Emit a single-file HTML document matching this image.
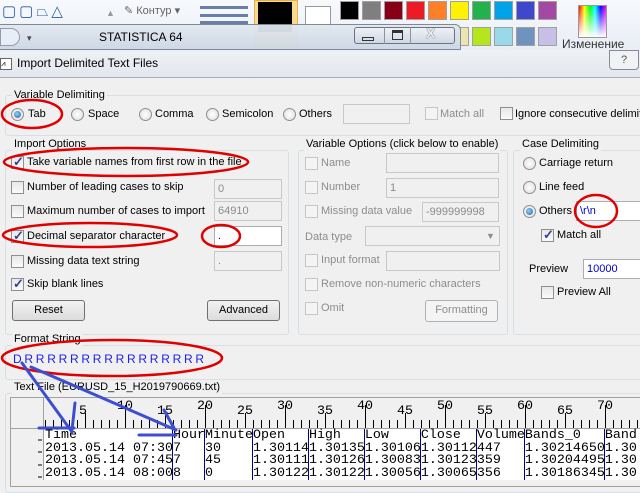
<!DOCTYPE html>
<html><head><meta charset="utf-8"><style>
*{box-sizing:border-box;margin:0;padding:0}
body{width:640px;height:480px;overflow:hidden;background:#f0f0f0;font-family:"Liberation Sans",sans-serif;font-size:11px;color:#000;position:relative}
.a{position:absolute;white-space:nowrap;line-height:15px}
.g{position:absolute;border:1px solid #d5dfe5;border-radius:3px}
.gl{position:absolute;background:#f0f0f0;padding:0 2px;line-height:14px}
.cb{position:absolute;width:13px;height:13px;border:1px solid #8e8f8f;background:linear-gradient(#e8e8e8,#fafafa)}
.cb.d{border-color:#c6c6c6;background:#f4f4f4}
.rb{position:absolute;width:13px;height:13px;border:1px solid #8e8f8f;border-radius:50%;background:radial-gradient(#fff,#dcdcdc)}
.rb.on::after{content:"";position:absolute;left:2px;top:2px;width:7px;height:7px;border-radius:50%;background:radial-gradient(circle at 40% 40%,#8fd2f5,#1f5fa8)}
.ck::after{content:"✓";position:absolute;left:1px;top:-3px;font-size:13px;color:#33448c;font-weight:bold}
.in{position:absolute;border:1px solid #abadb3;background:#fff;padding-left:3px;line-height:18px}
.in.d{border-color:#c8c8c8;background:#f0f0f0;color:#8a8a8a}
.dis{color:#8d8d8d}
.bt{position:absolute;border:1px solid #707070;border-radius:3px;background:linear-gradient(#f2f2f2,#dcdcdc);text-align:center;line-height:19px}
.bt.d{border-color:#adb2b5;color:#8d8d8d;background:#f4f4f4}
.mono{font-family:"Liberation Mono",monospace;font-size:13.33px;position:absolute;white-space:pre;line-height:12.7px}
.sw{position:absolute;width:19px;height:19px;border:1px solid #a0a0a0}
</style></head><body>
<div class="a" style="left:0;top:0;width:640px;height:50px;background:linear-gradient(#f7f9fc,#e9eef5)"></div>
<div class="a" style="left:2px;top:4px;width:95px;height:16px;color:#2a5ca8;font-size:15px;letter-spacing:3px">▢▢⏢△</div>
<div class="a" style="left:106px;top:6px;color:#999;font-size:9px">▲</div>
<div class="a" style="left:124px;top:4px;color:#666;font-size:11px">✎ Контур ▾</div>
<div class="a" style="left:200px;top:6px;width:48px;height:3px;background:#6a7fa8"></div>
<div class="a" style="left:200px;top:14px;width:48px;height:3px;background:#6a7fa8"></div>
<div class="a" style="left:200px;top:21px;width:48px;height:4px;background:#6a7fa8"></div>
<div class="a" style="left:254px;top:0;width:44px;height:50px;background:#fbd98c;border:1px solid #e5b050"></div>
<div class="a" style="left:258px;top:2px;width:34px;height:30px;background:#000"></div>
<div class="a" style="left:305px;top:6px;width:26px;height:24px;background:#fff;border:1px solid #999"></div>
<div class="sw" style="left:340px;top:1px;background:#000"></div>
<div class="sw" style="left:362px;top:1px;background:#7f7f7f"></div>
<div class="sw" style="left:384px;top:1px;background:#880015"></div>
<div class="sw" style="left:406px;top:1px;background:#ed1c24"></div>
<div class="sw" style="left:428px;top:1px;background:#ff7f27"></div>
<div class="sw" style="left:450px;top:1px;background:#fff200"></div>
<div class="sw" style="left:472px;top:1px;background:#22b14c"></div>
<div class="sw" style="left:494px;top:1px;background:#00a2e8"></div>
<div class="sw" style="left:516px;top:1px;background:#3f48cc"></div>
<div class="sw" style="left:538px;top:1px;background:#a349a4"></div>
<div class="sw" style="left:450px;top:27px;background:#efe4b0"></div>
<div class="sw" style="left:472px;top:27px;background:#b5e61d"></div>
<div class="sw" style="left:494px;top:27px;background:#99d9ea"></div>
<div class="sw" style="left:516px;top:27px;background:#7092be"></div>
<div class="sw" style="left:538px;top:27px;background:#c8bfe7"></div>
<div class="a" style="left:578px;top:5px;width:29px;height:33px;border:1px solid #999;background:linear-gradient(to bottom,rgba(255,255,255,0),#fff),linear-gradient(to right,red,yellow,lime,cyan,blue,magenta)"></div>
<div class="a" style="left:562px;top:37px;color:#333;font-size:12px">Изменение</div>
<div class="a" style="left:0;top:24px;width:461px;height:26px;background:linear-gradient(rgba(225,232,240,.95),rgba(205,215,228,.95));border:1px solid #7f8a96;border-left:none;border-radius:0 6px 0 0"></div>
<div class="a" style="left:0;top:28px;width:20px;height:18px;border:1px solid #99a;border-radius:0 9px 9px 0;background:#e8eef6"></div>
<div class="a" style="left:27px;top:31px;font-size:9px;color:#444">▾</div>
<div class="a" style="left:99px;top:30px;font-size:12px">STATISTICA 64</div>
<div class="a" style="left:354px;top:27px;width:101px;height:17px;border:1px solid #6b7580;border-radius:3px;background:linear-gradient(#eef2f7,#d0d8e2)"></div>
<div class="a" style="left:384px;top:27px;width:1px;height:17px;background:#8a94a0"></div>
<div class="a" style="left:410px;top:27px;width:1px;height:17px;background:#8a94a0"></div>
<div class="a" style="left:362px;top:37px;width:12px;height:4px;border:1px solid #333"></div>
<div class="a" style="left:392px;top:30px;width:11px;height:10px;border:1px solid #333;border-top-width:3px"></div>
<div class="a" style="left:426px;top:26px;font-size:14px;font-weight:bold;color:#eee;text-shadow:0 0 1px #000">X</div>
<div class="a" style="left:0;top:50px;width:640px;height:28px;background:linear-gradient(#eef1f4,#e3e8ee);border-bottom:1px solid #aab"></div>
<div class="a" style="left:0;top:58px;width:12px;height:12px;border:1px solid #666;background:#fff;font-size:8px;line-height:10px">⩘</div>
<div class="a" style="left:17px;top:56px;font-size:12px">Import Delimited Text Files</div>
<div class="a" style="left:609px;top:50px;width:30px;height:20px;border:1px solid #889;border-radius:0 0 4px 4px;background:#f0f2f5;text-align:center;line-height:18px;color:#555">?</div>

<div class="g" style="left:5px;top:95px;width:640px;height:41px"></div>
<div class="gl" style="left:12px;top:88px">Variable Delimiting</div>
<div class="rb on" style="left:11px;top:108px"></div><div class="a" style="left:28px;top:107px">Tab</div>
<div class="rb" style="left:71px;top:108px"></div><div class="a" style="left:88px;top:107px">Space</div>
<div class="rb" style="left:139px;top:108px"></div><div class="a" style="left:155px;top:107px">Comma</div>
<div class="rb" style="left:206px;top:108px"></div><div class="a" style="left:222px;top:107px">Semicolon</div>
<div class="rb" style="left:283px;top:108px"></div><div class="a" style="left:299px;top:107px">Others</div>
<div class="in d" style="left:343px;top:104px;width:67px;height:20px"></div>
<div class="cb d" style="left:425px;top:107px"></div><div class="a dis" style="left:440px;top:107px">Match all</div>
<div class="cb" style="left:500px;top:107px"></div><div class="a" style="left:515px;top:107px">Ignore consecutive delimiters</div>

<div class="g" style="left:5px;top:150px;width:284px;height:185px"></div>
<div class="gl" style="left:12px;top:137px">Import Options</div>
<div class="cb ck" style="left:11px;top:156px"></div><div class="a" style="left:27px;top:155px">Take variable names from first row in the file</div>
<div class="cb" style="left:11px;top:181px"></div><div class="a" style="left:27px;top:180px">Number of leading cases to skip</div>
<div class="in d" style="left:214px;top:179px;width:68px;height:20px">0</div>
<div class="cb" style="left:11px;top:205px"></div><div class="a" style="left:27px;top:204px">Maximum number of cases to import</div>
<div class="in d" style="left:214px;top:201px;width:68px;height:20px">64910</div>
<div class="cb ck" style="left:11px;top:230px"></div><div class="a" style="left:27px;top:229px">Decimal separator character</div>
<div class="in" style="left:214px;top:226px;width:68px;height:20px;color:#00c">.</div>
<div class="cb" style="left:11px;top:255px"></div><div class="a" style="left:27px;top:254px">Missing data text string</div>
<div class="in d" style="left:214px;top:251px;width:68px;height:20px">.</div>
<div class="cb ck" style="left:11px;top:278px"></div><div class="a" style="left:27px;top:277px">Skip blank lines</div>
<div class="bt" style="left:12px;top:300px;width:73px;height:21px">Reset</div>
<div class="bt" style="left:207px;top:300px;width:73px;height:21px">Advanced</div>

<div class="g" style="left:298px;top:150px;width:210px;height:185px"></div>
<div class="gl" style="left:304px;top:137px">Variable Options (click below to enable)</div>
<div class="cb d" style="left:305px;top:157px"></div><div class="a dis" style="left:321px;top:156px">Name</div>
<div class="in d" style="left:386px;top:153px;width:113px;height:20px"></div>
<div class="cb d" style="left:305px;top:181px"></div><div class="a dis" style="left:321px;top:180px">Number</div>
<div class="in d" style="left:386px;top:178px;width:113px;height:20px">1</div>
<div class="cb d" style="left:305px;top:205px"></div><div class="a dis" style="left:321px;top:204px">Missing data value</div>
<div class="in d" style="left:422px;top:202px;width:77px;height:20px">-999999998</div>
<div class="a dis" style="left:305px;top:230px">Data type</div>
<div class="in d" style="left:365px;top:226px;width:135px;height:20px"></div><div class="a dis" style="left:486px;top:229px;font-size:9px">▼</div>
<div class="cb d" style="left:305px;top:254px"></div><div class="a dis" style="left:321px;top:253px">Input format</div>
<div class="in d" style="left:386px;top:251px;width:114px;height:20px"></div>
<div class="cb d" style="left:305px;top:278px"></div><div class="a dis" style="left:321px;top:277px">Remove non-numeric characters</div>
<div class="cb d" style="left:305px;top:302px"></div><div class="a dis" style="left:321px;top:301px">Omit</div>
<div class="bt d" style="left:425px;top:300px;width:73px;height:22px">Formatting</div>

<div class="g" style="left:513px;top:150px;width:140px;height:185px"></div>
<div class="gl" style="left:520px;top:137px">Case Delimiting</div>
<div class="rb" style="left:523px;top:157px"></div><div class="a" style="left:539px;top:156px">Carriage return</div>
<div class="rb" style="left:523px;top:181px"></div><div class="a" style="left:539px;top:180px">Line feed</div>
<div class="rb on" style="left:523px;top:205px"></div><div class="a" style="left:539px;top:204px">Others</div>
<div class="in" style="left:576px;top:201px;width:70px;height:20px;color:#00c">\r\n</div>
<div class="cb ck" style="left:541px;top:229px"></div><div class="a" style="left:557px;top:228px">Match all</div>
<div class="a" style="left:529px;top:262px">Preview</div>
<div class="in" style="left:583px;top:259px;width:64px;height:20px;color:#00c">10000</div>
<div class="cb" style="left:541px;top:286px"></div><div class="a" style="left:557px;top:285px">Preview All</div>

<div class="g" style="left:5px;top:345px;width:640px;height:35px"></div>
<div class="gl" style="left:12px;top:332px">Format String</div>
<div class="a" style="left:13px;top:352px;color:#2020e0;font-size:12px;letter-spacing:-0.3px">D R R R R R R R R R R R R R R R R</div>

<div class="g" style="left:5px;top:393px;width:640px;height:100px"></div>
<div class="gl" style="left:12px;top:380px">Text File (EURUSD_15_H2019790669.txt)</div>
<div class="a" style="left:10px;top:397px;width:640px;height:90px;border:1px solid #a0a0a0;background:#f0f0f0"></div>
<div class="a" style="left:43px;top:397px;width:1px;height:83px;background:#a0a0a0"></div>
<div class="a" style="left:10px;top:428px;width:630px;height:1px;background:#a0a0a0"></div>
<div class="a" style="left:44px;top:429px;width:596px;height:51px;background:#fff"></div>
<svg class="a" style="left:0;top:0" width="640" height="480">
<g stroke="#000" stroke-width="1" shape-rendering="crispEdges">
<path d="M45.5 420V428M53.5 420V428M61.5 420V428M69.5 420V428M77.5 420V428M93.5 420V428M101.5 420V428M109.5 420V428M117.5 420V428M133.5 420V428M141.5 420V428M149.5 420V428M157.5 420V428M173.5 420V428M181.5 420V428M189.5 420V428M197.5 420V428M213.5 420V428M221.5 420V428M229.5 420V428M237.5 420V428M253.5 420V428M261.5 420V428M269.5 420V428M277.5 420V428M293.5 420V428M301.5 420V428M309.5 420V428M317.5 420V428M333.5 420V428M341.5 420V428M349.5 420V428M357.5 420V428M373.5 420V428M381.5 420V428M389.5 420V428M397.5 420V428M413.5 420V428M421.5 420V428M429.5 420V428M437.5 420V428M453.5 420V428M461.5 420V428M469.5 420V428M477.5 420V428M493.5 420V428M501.5 420V428M509.5 420V428M517.5 420V428M533.5 420V428M541.5 420V428M549.5 420V428M557.5 420V428M573.5 420V428M581.5 420V428M589.5 420V428M597.5 420V428M613.5 420V428M621.5 420V428M629.5 420V428M637.5 420V428"/>
<path d="M85.5 413V428M165.5 413V428M245.5 413V428M325.5 413V428M405.5 413V428M485.5 413V428M565.5 413V428"/>
<path d="M125.5 405V428M205.5 405V428M285.5 405V428M365.5 405V428M445.5 405V428M525.5 405V428M605.5 405V428"/>
<path d="M38 440H42M38 452H42M38 465H42M38 477H42"/>
</g>
<g stroke="#00008b" stroke-width="1" shape-rendering="crispEdges">
<path d="M172.5 429V480M204.5 429V480M252.5 429V480M308.5 429V480M364.5 429V480M420.5 429V480M476.5 429V480M524.5 429V480M604.5 429V480"/>
</g>
</svg>
<div class="mono" style="left:79px;top:406px">5</div>
<div class="mono" style="left:117px;top:401px">10</div>
<div class="mono" style="left:157px;top:406px">15</div>
<div class="mono" style="left:197px;top:401px">20</div>
<div class="mono" style="left:237px;top:406px">25</div>
<div class="mono" style="left:277px;top:401px">30</div>
<div class="mono" style="left:317px;top:406px">35</div>
<div class="mono" style="left:357px;top:401px">40</div>
<div class="mono" style="left:397px;top:406px">45</div>
<div class="mono" style="left:437px;top:401px">50</div>
<div class="mono" style="left:477px;top:406px">55</div>
<div class="mono" style="left:517px;top:401px">60</div>
<div class="mono" style="left:557px;top:406px">65</div>
<div class="mono" style="left:597px;top:401px">70</div>
<div class="mono" style="left:45px;top:430px">Time            HourMinuteOpen   High   Low    Close  VolumeBands_0   Band
2013.05.14 07:307   30    1.301141.301351.301061.30112447   1.302146501.30
2013.05.14 07:457   45    1.301111.301261.300831.30123359   1.302044951.30
2013.05.14 08:008   0     1.301221.301221.300561.30065356   1.301863451.30</div>

<svg class="a" style="left:0;top:0" width="640" height="480" fill="none">
<g stroke="#e00000" stroke-width="2.5">
<ellipse cx="32" cy="114" rx="30" ry="14"/>
<ellipse cx="126" cy="162" rx="122" ry="14"/>
<ellipse cx="90" cy="235" rx="87" ry="12"/>
<ellipse cx="221" cy="236" rx="19" ry="11"/>
<ellipse cx="596" cy="211" rx="21" ry="16"/>
<ellipse cx="112" cy="358" rx="110" ry="18"/>
</g>
<g stroke="#3d4fd0" stroke-width="3" stroke-linecap="round">
<path d="M22 363L72 432M31 367L176 430M75 403L72 430M164 410L174 428M39 428H74M139 435H176"/>
</g>
</svg>
</body></html>
